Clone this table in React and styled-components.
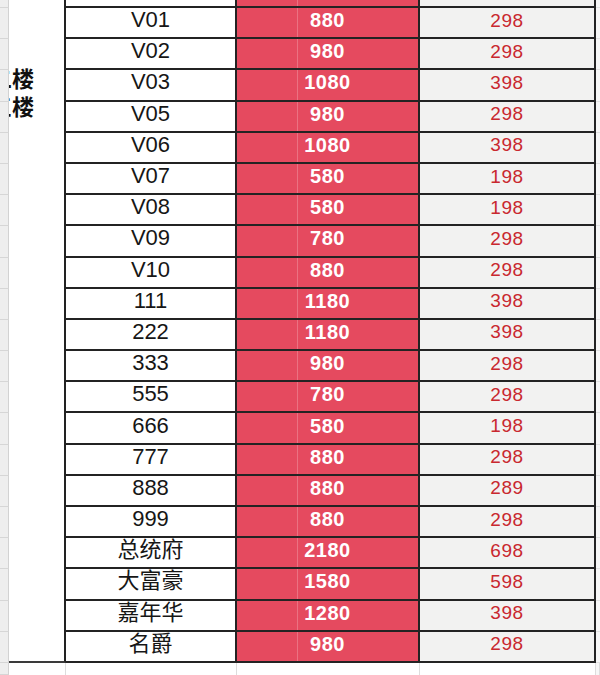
import React from 'react';
import styled, { createGlobalStyle } from 'styled-components';

const GlobalStyle = createGlobalStyle`
  html, body { margin: 0; padding: 0; background: #ffffff; }
  body { font-family: "Liberation Sans", "Noto Sans CJK SC", sans-serif; }
`;

const rows = [
  ['V01', '880', '298'],
  ['V02', '980', '298'],
  ['V03', '1080', '398'],
  ['V05', '980', '298'],
  ['V06', '1080', '398'],
  ['V07', '580', '198'],
  ['V08', '580', '198'],
  ['V09', '780', '298'],
  ['V10', '880', '298'],
  ['111', '1180', '398'],
  ['222', '1180', '398'],
  ['333', '980', '298'],
  ['555', '780', '298'],
  ['666', '580', '198'],
  ['777', '880', '298'],
  ['888', '880', '289'],
  ['999', '880', '298'],
  ['总统府', '2180', '698'],
  ['大富豪', '1580', '598'],
  ['嘉年华', '1280', '398'],
  ['名爵', '980', '298'],
];

const Sheet = styled.div`
  display: grid;
  width: 600px;
  height: 675px;
  overflow: hidden;
  grid-template-columns: 9px 57px 171px 183px 176px 4px;
  grid-template-rows: 8px repeat(21, 31.2px) 1fr;
  background: #ffffff;
`;

const Gutter = styled.div`
  background: #eeeeee;
  border-right: 1px solid #d2d2d2;
  border-bottom: 1px solid #d6d6d6;
`;

const MergedCell = styled.div`
  grid-column: 2;
  grid-row: 1 / span 22;
  background: #ffffff;
  border-right: 2px solid #222222;
  border-bottom: 2px solid #3a3a3a;
  overflow: hidden;
  padding-top: 63px;
`;

const FloorLabel = styled.div`
  margin-left: -19px;
  white-space: nowrap;
  font-family: "Noto Sans CJK SC", sans-serif;
  font-weight: 700;
  font-size: 22px;
  line-height: 28px;
  color: #111111;
`;

const Cell = styled.div`
  display: flex;
  align-items: center;
  justify-content: center;
  padding-bottom: 5px;
  border-right: 2px solid #232323;
  border-bottom: 2px solid #232323;
  white-space: nowrap;
  line-height: 1;
`;

const NameCell = styled(Cell)`
  background: #ffffff;
  color: #161616;
  font-size: ${(p) => (p.$cjk ? '22px' : '22px')};
`;

const PriceCell = styled(Cell)`
  background:
    linear-gradient(to right, transparent 60px, rgba(255, 255, 255, 0.22) 60px, rgba(255, 255, 255, 0.22) 61px, transparent 61px),
    #e54a5f;
  color: #ffffff;
  font-weight: 700;
  font-size: 20px;
  letter-spacing: 0.5px;
`;

const DiscountCell = styled(Cell)`
  background: #f2f2f1;
  color: #c9282f;
  font-size: 19px;
  letter-spacing: 0.6px;
`;

const Edge = styled.div`
  background: #f7f7f7;
  border-bottom: 1px solid #e2e2e2;
`;

const Blank = styled.div`
  background: ${(p) => p.$bg || '#ffffff'};
  border-right: 1px solid #dddddd;
`;

export default function App() {
  return (
    <>
      <GlobalStyle />
      <Sheet>
        <Gutter />
        <MergedCell>
          <FloorLabel>二楼</FloorLabel>
          <FloorLabel>三楼</FloorLabel>
        </MergedCell>
        <NameCell />
        <PriceCell />
        <DiscountCell />
        <Edge />
        {rows.map(([name, price, discount]) => (
          <React.Fragment key={name}>
            <Gutter />
            <NameCell $cjk={/[^\x00-\x7f]/.test(name)}>{name}</NameCell>
            <PriceCell>{price}</PriceCell>
            <DiscountCell>{discount}</DiscountCell>
            <Edge />
          </React.Fragment>
        ))}
        <Gutter />
        <Blank />
        <Blank />
        <Blank />
        <Blank />
        <Blank $bg="#f7f7f7" />
      </Sheet>
    </>
  );
}
